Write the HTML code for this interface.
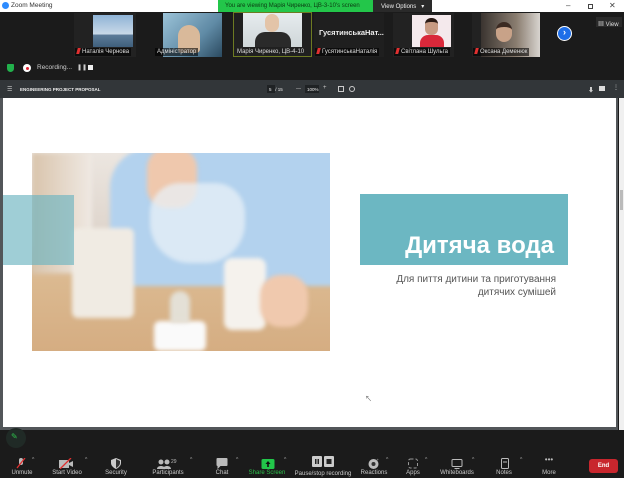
<!DOCTYPE html>
<html><head><meta charset="utf-8"><style>
*{margin:0;padding:0;box-sizing:border-box}
body{width:624px;height:478px;overflow:hidden;background:#1b1b1b;font-family:"Liberation Sans","Noto Sans CJK SC",sans-serif;position:relative}
.a{position:absolute}
.t{font-size:6.5px;color:#ddd;white-space:nowrap}
.lab{position:absolute;top:470px;font-size:6px;color:#ccc;white-space:nowrap;transform:translateX(-50%)}
.ic{position:absolute;top:456px;transform:translateX(-50%)}
.car{position:absolute;top:457px;font-size:5px;color:#aaa}
.nm{position:absolute;font-size:6px;color:#ddd;white-space:nowrap;background:rgba(0,0,0,.6);padding:0 2px;height:8px;line-height:8px}
.mic{display:inline-block;width:3px;height:6px;background:#e03030;margin-right:2px;vertical-align:-1px;transform:skewX(-15deg)}
.b{filter:blur(2px)}
</style></head><body>
<div class="a" style="left:0;top:0;width:624px;height:12px;background:#fff"></div>
<div class="a" style="left:2px;top:2px;width:7px;height:7px;border-radius:50%;background:#2d8cff"></div>
<div class="a t" style="left:11px;top:2px;color:#333;font-size:6.5px">Zoom Meeting</div>
<div class="a" style="left:218px;top:0;width:155px;height:12px;background:#23c64a"></div>
<div class="a t" style="left:225px;top:3px;color:#0b3b12;font-size:6px">You are viewing Марія Чиренко, ЦВ-3-10's screen</div>
<div class="a" style="left:373px;top:0;width:59px;height:12px;background:#2a2a2a"></div>
<div class="a t" style="left:381px;top:3px;font-size:6px;color:#eee">View Options &nbsp; ▾</div>
<div class="a t" style="left:566px;top:1px;color:#444;font-size:8px">–</div>
<div class="a" style="left:588px;top:4px;width:5px;height:5px;border:1px solid #444"></div>
<div class="a t" style="left:609px;top:1px;color:#444;font-size:8px">✕</div>
<div class="a" style="left:74px;top:13px;width:62px;height:44px;background:#222"></div>
<div class="a" style="left:93px;top:15px;width:40px;height:32px;background:linear-gradient(#8fb3d6,#c9d9e8 60%,#5d7c99 62%,#3f5f7c)"></div>
<div class="nm" style="left:75px;top:48px"><span class="mic"></span>Наталія Чернова</div>
<div class="a" style="left:163px;top:13px;width:59px;height:44px;background:linear-gradient(135deg,#9cc3d8,#5f8aa5 60%,#2b4a60)"></div>
<div class="a" style="left:178px;top:25px;width:22px;height:28px;border-radius:11px 11px 4px 4px;background:#d9b99a"></div>
<div class="nm" style="left:155px;top:48px">Адміністратор</div>
<div class="a" style="left:233px;top:12px;width:79px;height:45px;border:1px solid #6d7a22;background:#202020"></div>
<div class="a" style="left:243px;top:13px;width:59px;height:34px;background:linear-gradient(#e6ecef,#cfd6d8)"></div>
<div class="a" style="left:255px;top:32px;width:36px;height:15px;background:#2a2a2a;border-radius:10px 10px 0 0"></div>
<div class="a" style="left:265px;top:14px;width:14px;height:18px;border-radius:7px;background:#e3c4a8"></div>
<div class="nm" style="left:235px;top:48px;background:none">Марія Чиренко, ЦВ-4-10</div>
<div class="a" style="left:314px;top:13px;width:70px;height:44px;background:#1f1f1f"></div>
<div class="a t" style="left:319px;top:28px;font-size:7.5px;font-weight:bold;color:#eee">ГусятинськаНат...</div>
<div class="nm" style="left:315px;top:48px"><span class="mic"></span>ГусятинськаНаталія</div>
<div class="a" style="left:393px;top:13px;width:61px;height:44px;background:#222"></div>
<div class="a" style="left:412px;top:15px;width:39px;height:32px;background:#f4e9ec"></div>
<div class="a" style="left:420px;top:35px;width:24px;height:12px;background:#d9283a;border-radius:8px 8px 0 0"></div>
<div class="a" style="left:425px;top:18px;width:13px;height:17px;border-radius:6px;background:#c79a82;border-top:4px solid #2a1a14"></div>
<div class="nm" style="left:394px;top:48px"><span class="mic"></span>Світлана Шульга</div>
<div class="a" style="left:472px;top:13px;width:68px;height:44px;background:#222"></div>
<div class="a" style="left:481px;top:13px;width:59px;height:44px;background:linear-gradient(90deg,#3a3430,#8a7d70 60%,#d8d4cf)"></div>
<div class="a" style="left:496px;top:22px;width:16px;height:20px;border-radius:8px;background:#c8a288;border-top:5px solid #3b2a22"></div>
<div class="nm" style="left:473px;top:48px"><span class="mic"></span>Оксана Деменюк</div>
<div class="a" style="left:557px;top:26px;width:15px;height:15px;border-radius:50%;background:#1e6ee8;border:1.5px solid #fff;color:#fff;font-size:9px;line-height:11px;text-align:center;font-weight:bold">›</div>
<div class="a" style="left:596px;top:17px;width:26px;height:10px;background:#2a2a2a"></div>
<div class="a t" style="left:598px;top:19px;font-size:6px">▦ View</div>
<div class="a" style="left:7px;top:64px;width:7px;height:8px;background:#22b14c;border-radius:1px 1px 4px 4px"></div>
<div class="a" style="left:23px;top:64px;width:8px;height:8px;border-radius:50%;background:#fff"></div>
<div class="a" style="left:25.5px;top:66.5px;width:3px;height:3px;border-radius:50%;background:#e02030"></div>
<div class="a t" style="left:37px;top:64px;font-size:6.5px;color:#ccc">Recording...</div>
<div class="a t" style="left:77px;top:64px;font-size:6px;color:#ccc">❚❚</div>
<div class="a" style="left:88px;top:65px;width:5px;height:5px;background:#eee"></div>
<div class="a" style="left:0;top:80px;width:624px;height:18px;background:#323639"></div>
<div class="a t" style="left:7px;top:86px;font-size:6px;color:#ccc">☰</div>
<div class="a t" style="left:20px;top:87px;font-size:4.5px;font-weight:bold;color:#eee">ENGINEERING PROJECT PROPOSAL</div>
<div class="a" style="left:267px;top:85px;width:8px;height:8px;background:#1f2224"></div>
<div class="a t" style="left:269px;top:87px;font-size:4.5px;color:#eee">5 &nbsp; / 15</div>
<div class="a t" style="left:296px;top:86px;font-size:5px;color:#ccc">—</div>
<div class="a" style="left:305px;top:85px;width:14px;height:8px;background:#1f2224"></div>
<div class="a t" style="left:307px;top:87px;font-size:4.5px;color:#eee">100%</div>
<div class="a t" style="left:323px;top:85px;font-size:6px;color:#ccc">+</div>
<div class="a" style="left:338px;top:86px;width:6px;height:6px;border:1px solid #ccc"></div>
<div class="a" style="left:349px;top:86px;width:6px;height:6px;border:1px solid #ccc;border-radius:50%"></div>
<div class="a t" style="left:588px;top:85px;font-size:6px;color:#ccc">⬇</div>
<div class="a" style="left:599px;top:86px;width:6px;height:5px;background:#ddd"></div>
<div class="a t" style="left:613px;top:84px;font-size:6px;color:#ccc">⋮</div>
<div class="a" style="left:0;top:98px;width:618px;height:332px;background:#525659"></div>
<div class="a" style="left:3px;top:98px;width:613px;height:329px;background:#fff"></div>
<div class="a" style="left:619px;top:98px;width:5px;height:332px;background:#f0f0f0"></div>
<div class="a" style="left:620px;top:190px;width:3px;height:20px;background:#bbb"></div>
<div class="a" style="left:32px;top:153px;width:298px;height:198px;background:linear-gradient(180deg,#ece6e0 0%,#ddd3ca 45%,#dbb990 64%,#d5ad82 100%);overflow:hidden">
 <div class="a b" style="left:0;top:0;width:60px;height:120px;background:linear-gradient(90deg,#d9c4ac,#efe9e3)"></div>
 <div class="a b" style="left:78px;top:-5px;width:225px;height:138px;background:#b3d2ee;border-radius:40px 0 0 0"></div>
 <div class="a b" style="left:115px;top:-5px;width:50px;height:60px;background:#efc8ad;border-radius:20px"></div>
 <div class="a b" style="left:118px;top:30px;width:95px;height:80px;border-radius:30px 30px 40px 40px;background:rgba(232,240,247,.75)"></div>
 <div class="a b" style="left:40px;top:75px;width:62px;height:90px;background:#f0ebe3;border-radius:6px"></div>
 <div class="a b" style="left:192px;top:105px;width:42px;height:72px;background:#f5f2ed;border-radius:8px"></div>
 <div class="a b" style="left:228px;top:122px;width:48px;height:52px;background:#f0c9ae;border-radius:20px"></div>
 <div class="a b" style="left:122px;top:168px;width:52px;height:30px;background:#fafafa;border-radius:6px"></div>
 <div class="a b" style="left:138px;top:138px;width:20px;height:32px;background:rgba(228,228,222,.9);border-radius:10px 10px 3px 3px"></div>
</div>
<div class="a" style="left:3px;top:195px;width:71px;height:70px;background:rgba(107,180,192,.65)"></div>
<div class="a" style="left:360px;top:194px;width:208px;height:71px;background:#6cb7c2"></div>
<div class="a" style="left:360px;top:231px;width:194px;text-align:right;font-size:24px;font-weight:bold;color:#fff;line-height:30px">Дитяча вода</div>
<div class="a" style="left:360px;top:273px;width:196px;text-align:right;font-size:10px;color:#555;line-height:13px">Для пиття дитини та приготування<br>дитячих сумішей</div>
<div class="a t" style="left:365px;top:394px;font-size:7px;color:#666">↖</div>
<div class="a" style="left:6px;top:428px;width:20px;height:20px;border-radius:50%;background:#202a26"></div>
<div class="a t" style="left:11px;top:432px;font-size:8px;color:#2ec04c">✎</div>
<div class="ic" style="left:21px"><svg width="10" height="11"><rect x="3" y="0" width="4" height="7" rx="2" fill="#bbb"/><line x1="1" y1="10" x2="9" y2="0" stroke="#e03030" stroke-width="1.3"/></svg></div><div class="car" style="left:32px">^</div>
<div class="ic" style="left:66px"><svg width="14" height="11"><rect x="0" y="2" width="10" height="8" fill="#bbb"/><path d="M10 5 L14 3 V9 L10 7z" fill="#bbb"/><line x1="1" y1="11" x2="12" y2="0" stroke="#e03030" stroke-width="1.3"/></svg></div><div class="car" style="left:85px">^</div>
<div class="ic" style="left:116px"><svg width="10" height="11"><path d="M5 0 L10 2 V5 C10 8 7 10 5 11 C3 10 0 8 0 5 V2z" fill="#ccc"/><path d="M5 1 V10 C7 9 9 7 9 5 V3z" fill="#333"/></svg></div>
<div class="ic" style="left:167px"><svg width="20" height="11"><circle cx="4" cy="4" r="2.5" fill="#bbb"/><circle cx="10" cy="4" r="2.5" fill="#bbb"/><path d="M0 11 C0 7 8 7 8 11z M6 11 C6 7 14 7 14 11z" fill="#bbb"/><text x="14" y="5" font-size="5" fill="#bbb" font-family="Liberation Sans">29</text></svg></div><div class="car" style="left:190px">^</div>
<div class="ic" style="left:222px"><svg width="11" height="11"><path d="M1 0 H10 Q11 0 11 1 V7 Q11 8 10 8 H4 L1 11 V8 Q0 8 0 7 V1 Q0 0 1 0z" fill="#bbb"/></svg></div><div class="car" style="left:236px">^</div>
<div class="ic" style="left:268px"><svg width="13" height="10"><rect width="13" height="10" rx="1.5" fill="#22c64a"/><path d="M6.5 2 L9 5 H7.3 V8 H5.7 V5 H4z" fill="#111"/></svg></div><div class="car" style="left:284px">^</div>
<div class="ic" style="left:323px;top:454px"><svg width="22" height="11"><rect x="0" width="10" height="11" rx="1" fill="#ccc"/><rect x="12" width="10" height="11" rx="1" fill="#ccc"/><rect x="3" y="3" width="1.5" height="5" fill="#222"/><rect x="5.5" y="3" width="1.5" height="5" fill="#222"/><rect x="14.5" y="3" width="5" height="5" fill="#222"/></svg></div>
<div class="ic" style="left:374px"><svg width="11" height="11"><circle cx="5" cy="6" r="5" fill="#bbb"/><circle cx="5" cy="6" r="2" fill="#333"/><text x="8" y="3" font-size="4" fill="#bbb">+</text></svg></div><div class="car" style="left:386px">^</div>
<div class="ic" style="left:413px"><svg width="10" height="11"><rect x="0.5" y="1" width="9" height="9" rx="2" fill="none" stroke="#999" stroke-dasharray="3 2"/></svg></div><div class="car" style="left:425px">^</div>
<div class="ic" style="left:457px"><svg width="11" height="10"><rect x="0.5" y="0.5" width="10" height="7" rx="1" fill="none" stroke="#bbb"/><line x1="3" y1="9.5" x2="8" y2="9.5" stroke="#bbb"/></svg></div><div class="car" style="left:472px">^</div>
<div class="ic" style="left:505px"><svg width="8" height="11"><rect x="0.5" y="0.5" width="7" height="10" rx="1" fill="none" stroke="#bbb"/><line x1="2" y1="4" x2="6" y2="4" stroke="#bbb"/></svg></div><div class="car" style="left:520px">^</div>
<div class="ic" style="left:549px;color:#bbb;font-size:8px;top:455px">•••</div>
<div class="lab" style="left:22px">Unmute</div>
<div class="lab" style="left:67px">Start Video</div>
<div class="lab" style="left:116px">Security</div>
<div class="lab" style="left:168px">Participants</div>
<div class="lab" style="left:222px">Chat</div>
<div class="lab" style="left:267px;color:#2ec04c">Share Screen</div>
<div class="lab" style="left:323px;top:471px">Pause/stop recording</div>
<div class="lab" style="left:374px">Reactions</div>
<div class="lab" style="left:413px">Apps</div>
<div class="lab" style="left:457px">Whiteboards</div>
<div class="lab" style="left:504px">Notes</div>
<div class="lab" style="left:549px">More</div>
<div class="a" style="left:589px;top:459px;width:29px;height:14px;border-radius:3px;background:#c8262d;color:#fff;font-size:6px;text-align:center;line-height:14px;font-weight:bold">End</div>
</body></html>
